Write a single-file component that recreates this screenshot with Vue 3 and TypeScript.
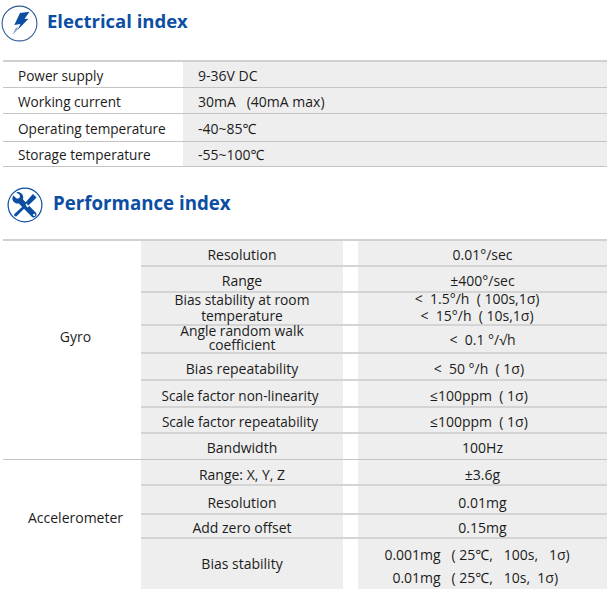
<script setup lang="ts">
interface Row { name: string[]; value: string[]; h: number; nudge?: number; vnudge?: number }
const sp = '\u00a0'
const electrical = [
  { k: 'Power supply', v: '9-36V DC', h: 26 },
  { k: 'Working current', v: `30mA${sp}${sp} (40mA max)`, h: 26 },
  { k: 'Operating temperature', v: '-40~85℃', h: 28 },
  { k: 'Storage temperature', v: '-55~100℃', h: 25 },
]
const gyro: Row[] = [
  { name: ['Resolution'], value: ['0.01°/sec'], h: 26, nudge: 2 },
  { name: ['Range'], value: ['±400°/sec'], h: 26, nudge: 2 },
  { name: ['Bias stability at room', 'temperature'], value: [`<${sp} 1.5°/h${sp} ( 100s,1σ)${sp}${sp}${sp}`, `<${sp} 15°/h${sp} ( 10s,1σ)${sp}${sp}${sp}`], h: 33 },
  { name: ['Angle random walk', 'coefficient'], value: [`<${sp} 0.1 °/√h`], h: 28 },
  { name: ['Bias repeatability'], value: [`<${sp} 50 °/h${sp} ( 1σ)${sp}${sp}`], h: 27, nudge: 3 },
  { name: ['Scale factor non-linearity'], value: [`≤100ppm${sp} ( 1σ)${sp}${sp}`], h: 27, nudge: 3 },
  { name: ['Scale factor repeatability'], value: [`≤100ppm${sp} ( 1σ)${sp}${sp}`], h: 26, nudge: 3 },
  { name: ['Bandwidth'], value: ['100Hz'], h: 25, nudge: 1 },
]
const accel: Row[] = [
  { name: ['Range: X, Y, Z'], value: ['±3.6g'], h: 26, nudge: 4 },
  { name: ['Resolution'], value: ['0.01mg'], h: 29, nudge: 6 },
  { name: ['Add zero offset'], value: ['0.15mg'], h: 24, nudge: 2 },
  { name: ['Bias stability'], value: [`0.001mg${sp}${sp} ( 25℃,${sp}${sp} 100s,${sp}${sp} 1σ)${sp}${sp}${sp}`, `0.01mg${sp}${sp} ( 25℃,${sp}${sp} 10s,${sp} 1σ)${sp}${sp}${sp}${sp}`], h: 50, vnudge: 4 },
]
const groups = [
  { title: 'Gyro', rows: gyro, lift: 27 },
  { title: 'Accelerometer', rows: accel, lift: 14 },
]
</script>

<template>
  <main class="page">
    <header class="head head-one">
      <svg class="icon" viewBox="1 5 37 37" width="37" height="37" aria-hidden="true">
        <circle cx="19.5" cy="23.5" r="17.4" fill="#fff" stroke="#2f5d93" stroke-width="1.1" />
        <path d="M20 13 L29.5 11.8 L24.5 19 L28.5 18.8 L17.5 30 L20.5 24 L14.3 25 Z" fill="#0b4ea2" />
        <path d="M17.5 29.5 L12.5 35 L15.5 28.5 L18 27 Z" fill="#7f9dc2" />
      </svg>
      <h2 class="title">Electrical index</h2>
    </header>

    <section class="elec">
      <div v-for="r in electrical" :key="r.k" class="elec-row" :style="{ height: r.h + 'px' }">
        <div class="elec-k">{{ r.k }}</div>
        <div class="elec-v">{{ r.v }}</div>
      </div>
    </section>

    <header class="head head-two">
      <svg class="icon" viewBox="0 0 36 36" width="36" height="36" aria-hidden="true">
        <circle cx="18" cy="18" r="16.9" fill="#fff" stroke="#0b4ea2" stroke-width="1.2" />
        <!-- wrench -->
        <path d="M6.2 8.6 L10 11.8 L12.6 10.9 L12.9 8 L9.3 5.2 C12.8 4.3 16.6 6.8 16.2 11 L16 12.6 L29.2 26 A3 3 0 0 1 25 30 L11.8 16.4 C8.4 17.2 5 14.6 5.4 10.8 Z" fill="#0b4ea2" />
        <circle cx="27.1" cy="27.9" r="1.1" fill="#fff" />
        <!-- screwdriver -->
        <path d="M18 18.6 L25.4 6.6 L29.8 8.6 L30.6 11.4 L20.6 20.4 Z" fill="#fff" />
        <path d="M25.9 6.9 L29.6 10.5 L21.4 18.4 L18.4 15.6 Z" fill="#0b4ea2" />
        <path d="M18 17.3 L19.8 19.1 L9.8 29 A1.6 1.6 0 0 1 7.4 26.9 Z" fill="#0b4ea2" />
      </svg>
      <h2 class="title title-two">Performance index</h2>
    </header>

    <section class="perf">
      <div v-for="g in groups" :key="g.title" class="group">
        <div class="group-name" :style="{ paddingBottom: g.lift + 'px' }">{{ g.title }}</div>
        <div class="group-rows">
          <div v-for="r in g.rows" :key="r.name[0]" class="perf-row" :style="{ height: r.h + 'px' }">
            <div class="cell cell-name" :class="{ tight: r.name.length > 1, up: r.h === 50, bias: r.h === 33 }" :style="{ paddingTop: (r.nudge ?? 0) + 'px' }">
              <div v-for="l in r.name" :key="l" :class="{ long: l.startsWith('Scale') }">{{ l }}</div>
            </div>
            <div class="gap"></div>
            <div class="cell cell-value" :class="{ wide: r.h === 50, mid: r.h === 33 }" :style="{ paddingTop: (r.vnudge ?? r.nudge ?? 0) + 'px' }">
              <div v-for="l in r.value" :key="l">{{ l }}</div>
            </div>
          </div>
        </div>
      </div>
    </section>
  </main>
</template>

<style>
html, body { margin: 0; background: #fff; }
</style>

<style scoped>
.page {
  width: 607px;
  height: 589px;
  overflow: hidden;
  font-family: "Open Sans", "Noto Sans", sans-serif;
  font-size: 14px;
  color: #1c1c1c;
}
.head { display: flex; align-items: center; }
.head-one { height: 37px; padding: 5px 0 0 1px; gap: 9px; margin-bottom: 18px; }
.head-two { height: 36px; padding-left: 7px; gap: 10px; margin-top: 20px; margin-bottom: 16px; }
.icon { flex: none; }
.title {
  margin: 0 0 7px;
  font-size: 18.5px;
  font-weight: 700;
  color: #0b4ea2;
}
.title-two { font-size: 18.7px; margin-bottom: 6px; }
.elec { margin-left: 3px; border-top: 2px solid #d0d0d0; }
.elec-row { display: flex; box-sizing: border-box; border-bottom: 1px solid #c4c4c4; }
.elec-k { width: 180px; padding: 2px 0 0 15px; box-sizing: border-box; display: flex; align-items: center; font-size: 13.6px; }
.elec-v { flex: 1; background: #eee; padding: 2px 0 0 15px; display: flex; align-items: center; }
.elec-row:last-child .elec-k, .elec-row:last-child .elec-v { padding-top: 0; }
.perf { margin-left: 3px; border-top: 2px solid #d0d0d0; }
.group { display: flex; border-bottom: 1px solid #c4c4c4; }
.group:last-child { border-bottom: 0; }
.group-name { width: 138px; box-sizing: border-box; padding-left: 7px; display: flex; align-items: center; justify-content: center; }
.group-rows { flex: 1; }
.perf-row { display: flex; box-sizing: border-box; border-bottom: 2px solid #d4d4d4; }
.group-rows .perf-row:last-child { border-bottom: 0; }
.cell { box-sizing: border-box; display: flex; flex-direction: column; align-items: center; justify-content: center; background: #eee; text-align: center; white-space: nowrap; }
.cell-name { width: 202px; }
.cell-value { flex: 1; }
.gap { width: 15px; }
.long { font-size: 13.6px; margin-right: 4px; }
.tight { line-height: 14px; font-size: 13.8px; padding-bottom: 3px; }
.bias { line-height: 16px; padding-bottom: 2px; }
.up { padding-bottom: 2px; }
.mid { line-height: 17px; padding-bottom: 3px; }
.wide { line-height: 23px; }
</style>
